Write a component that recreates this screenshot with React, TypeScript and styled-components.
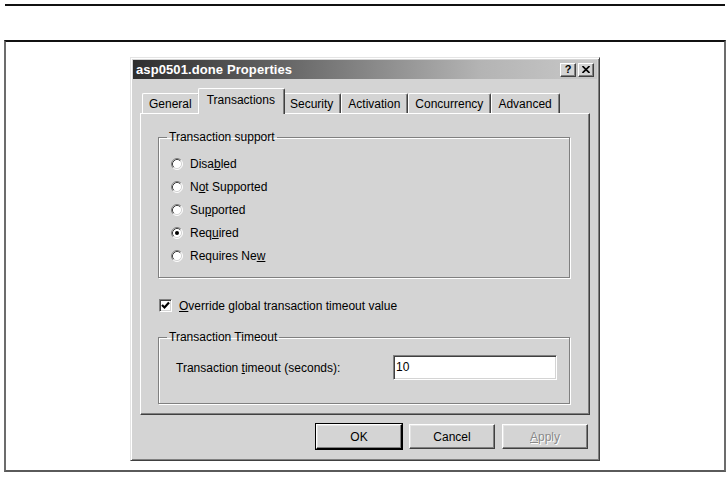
import React from "react";
import styled, { createGlobalStyle, css } from "styled-components";

const Global = createGlobalStyle`
  html, body { margin: 0; padding: 0; background: #ffffff; }
  body { font-family: "Liberation Sans", Arial, sans-serif; font-size: 12px; color: #000; }
  #root { width: 728px; height: 478px; overflow: hidden; }
`;

const FACE = "#d4d4d4";

const Page = styled.div`
  width: 728px;
  height: 478px;
  padding-top: 4px;
  box-sizing: border-box;
  display: flex;
  flex-direction: column;
`;

const TopRule = styled.div`
  height: 2px;
  margin: 0 3px 0 5px;
  background: #111;
`;

const Frame = styled.div`
  margin: 34px 2px 0 4px;
  height: 432px;
  box-sizing: border-box;
  border-top: 2px solid #111;
  border-left: 2px solid #6c6c6c;
  border-right: 2px solid #6c6c6c;
  border-bottom: 2px solid #5a5a5a;
  display: flex;
  justify-content: center;
  padding: 15px 0 0 0;
`;

const Dialog = styled.div`
  width: 470px;
  height: 404px;
  box-sizing: border-box;
  background: ${FACE};
  border: 1px solid;
  border-color: #e4e4e4 #404040 #404040 #e4e4e4;
  box-shadow: inset 1px 1px 0 #ffffff, inset -1px -1px 0 #808080;
  padding: 2px 2px;
  display: flex;
  flex-direction: column;
`;

const TitleBar = styled.div`
  height: 19px;
  display: flex;
  align-items: center;
  padding: 0 3px 0 3px;
  background: linear-gradient(90deg, #2e2e2e 0%, #6a6a6a 35%, #b4b4b4 75%, #c8c8c8 100%);
`;

const Title = styled.span`
  flex: 1;
  color: #ffffff;
  font-weight: bold;
  font-size: 13px;
  letter-spacing: 0.1px;
`;

const CaptionButton = styled.div`
  width: 16px;
  height: 14px;
  box-sizing: border-box;
  background: ${FACE};
  border: 1px solid;
  border-color: #ffffff #404040 #404040 #ffffff;
  box-shadow: inset -1px -1px 0 #808080;
  display: flex;
  align-items: center;
  justify-content: center;
  font-weight: bold;
  font-size: 11px;
  line-height: 1;
  margin-left: 2px;
`;

const Body = styled.div`
  flex: 1;
  display: flex;
  flex-direction: column;
  padding: 9px 7px 0 7px;
`;

const TabStrip = styled.div`
  display: flex;
  align-items: flex-end;
  height: 25px;
  padding-left: 2px;
  position: relative;
  z-index: 1;
`;

const Tab = styled.div<{ $active?: boolean }>`
  height: 20px;
  box-sizing: border-box;
  padding: 0 7px 0 6px;
  display: flex;
  align-items: center;
  background: ${FACE};
  border-top: 1px solid #ffffff;
  border-left: 1px solid #ffffff;
  border-right: 1px solid #404040;
  border-radius: 2px 2px 0 0;
  box-shadow: inset -1px 0 0 #808080;
  white-space: nowrap;
  ${(p) =>
    p.$active &&
    css`
      height: 26px;
      margin: 0 -2px -1px -2px;
      padding: 0 9px 4px 8px;
      position: relative;
      z-index: 2;
    `}
`;

const Panel = styled.div`
  height: 302px;
  box-sizing: border-box;
  border: 1px solid;
  border-color: #ffffff #404040 #404040 #ffffff;
  box-shadow: inset -1px -1px 0 #808080;
  padding: 16px 19px 0 17px;
  display: flex;
  flex-direction: column;
`;

const Group = styled.fieldset`
  margin: 0;
  padding: 0;
  min-width: 0;
  border: 1px solid #808080;
  box-shadow: inset 1px 1px 0 #ffffff, 1px 1px 0 #ffffff;
`;

const Legend = styled.legend`
  margin-left: 8px;
  padding: 0 2px;
  line-height: 14px;
`;

const RadioList = styled.div`
  display: flex;
  flex-direction: column;
  padding: 8px 0 10px 12px;
`;

const OptionRow = styled.label`
  height: 23px;
  display: flex;
  align-items: center;
  gap: 7px;
`;

const Key = styled.span`
  text-decoration: underline;
  text-underline-offset: 1px;
`;

const CheckRow = styled.label`
  height: 17px;
  display: flex;
  align-items: center;
  gap: 7px;
  margin: 19px 0 16px 1px;
`;

const CheckBox = styled.span`
  width: 13px;
  height: 13px;
  box-sizing: border-box;
  background: #ffffff;
  border: 1px solid;
  border-color: #808080 #ffffff #ffffff #808080;
  box-shadow: inset 1px 1px 0 #404040, inset -1px -1px 0 #d4d4d4;
  display: flex;
  align-items: center;
  justify-content: center;
`;

const TimeoutRow = styled.div`
  display: flex;
  align-items: center;
  padding: 11px 12px 23px 17px;
`;

const Field = styled.div`
  margin-left: auto;
  width: 164px;
  height: 25px;
  box-sizing: border-box;
  background: #ffffff;
  border: 1px solid;
  border-color: #808080 #ffffff #ffffff #808080;
  box-shadow: inset 1px 1px 0 #404040, inset -1px -1px 0 #d4d4d4;
  padding: 4px 2px;
  line-height: 15px;
  font-size: 12px;
`;

const ButtonRow = styled.div`
  display: flex;
  justify-content: flex-end;
  gap: 7px;
  margin-top: 9px;
  padding-right: 2px;
`;

const Button = styled.div<{ $default?: boolean; $disabled?: boolean }>`
  width: 86px;
  height: 25px;
  box-sizing: border-box;
  display: flex;
  align-items: center;
  justify-content: center;
  background: ${FACE};
  border: 1px solid;
  border-color: #ffffff #404040 #404040 #ffffff;
  box-shadow: inset -1px -1px 0 #808080, inset 1px 1px 0 #e4e4e4;
  ${(p) =>
    p.$default &&
    css`
      outline: 1px solid #000;
      outline-offset: 0;
      border-color: #ffffff #000 #000 #ffffff;
    `}
  ${(p) =>
    p.$disabled &&
    css`
      color: #8a8a8a;
      text-shadow: 1px 1px 0 #ffffff;
    `}
`;

function Radio({ checked }: { checked?: boolean }) {
  return (
    <svg width="12" height="12" viewBox="0 0 12 12" style={{ flex: "none" }}>
      <circle cx="6" cy="6" r="5" fill="#ffffff" />
      <path d="M2.11 9.89 A5.5 5.5 0 0 1 9.89 2.11" stroke="#808080" fill="none" />
      <path d="M9.89 2.11 A5.5 5.5 0 0 1 2.11 9.89" stroke="#ffffff" fill="none" />
      <path d="M2.82 9.18 A4.5 4.5 0 0 1 9.18 2.82" stroke="#404040" fill="none" />
      <path d="M9.18 2.82 A4.5 4.5 0 0 1 2.82 9.18" stroke="#d4d4d4" fill="none" />
      {checked && <circle cx="6" cy="6" r="2" fill="#000" />}
    </svg>
  );
}

function Check() {
  return (
    <svg width="9" height="9" viewBox="0 0 9 9">
      <path d="M1 4 L3.5 6.5 L8 1.5" stroke="#000" strokeWidth="2.2" fill="none" />
    </svg>
  );
}

const options: { label: React.ReactNode; checked?: boolean }[] = [
  { label: <>Disa<Key>b</Key>led</> },
  { label: <>N<Key>o</Key>t Supported</> },
  { label: <>Su<Key>p</Key>ported</> },
  { label: <>Req<Key>u</Key>ired</>, checked: true },
  { label: <>Requires Ne<Key>w</Key></> },
];

const tabs = ["General", "Transactions", "Security", "Activation", "Concurrency", "Advanced"];

export default function App() {
  return (
    <>
      <Global />
      <Page>
        <TopRule />
        <Frame>
          <Dialog>
            <TitleBar>
              <Title>asp0501.done Properties</Title>
              <CaptionButton>?</CaptionButton>
              <CaptionButton>
                <svg width="8" height="7" viewBox="0 0 8 7">
                  <path d="M0.5 0 L7.5 7 M7.5 0 L0.5 7" stroke="#000" strokeWidth="1.6" />
                </svg>
              </CaptionButton>
            </TitleBar>
            <Body>
              <TabStrip>
                {tabs.map((t) => (
                  <Tab key={t} $active={t === "Transactions"}>
                    {t}
                  </Tab>
                ))}
              </TabStrip>
              <Panel>
                <Group>
                  <Legend>Transaction support</Legend>
                  <RadioList>
                    {options.map((o, i) => (
                      <OptionRow key={i}>
                        <Radio checked={o.checked} />
                        <span>{o.label}</span>
                      </OptionRow>
                    ))}
                  </RadioList>
                </Group>
                <CheckRow>
                  <CheckBox>
                    <Check />
                  </CheckBox>
                  <span>
                    <Key>O</Key>verride global transaction timeout value
                  </span>
                </CheckRow>
                <Group>
                  <Legend>Transaction Timeout</Legend>
                  <TimeoutRow>
                    <span>
                      Transaction <Key>t</Key>imeout (seconds):
                    </span>
                    <Field>10</Field>
                  </TimeoutRow>
                </Group>
              </Panel>
              <ButtonRow>
                <Button $default>OK</Button>
                <Button>Cancel</Button>
                <Button $disabled>
                  <span>
                    <Key>A</Key>pply
                  </span>
                </Button>
              </ButtonRow>
            </Body>
          </Dialog>
        </Frame>
      </Page>
    </>
  );
}
